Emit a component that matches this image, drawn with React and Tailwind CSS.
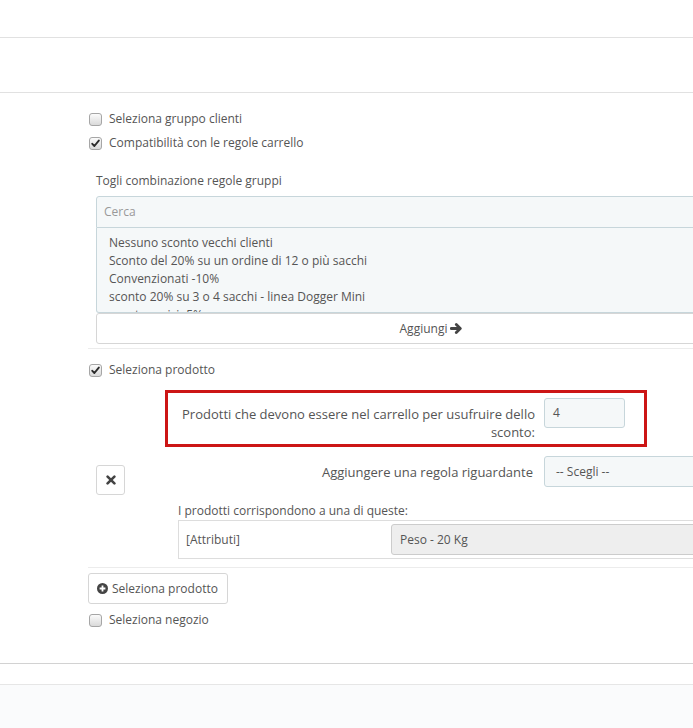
import React from "react";

function Check({ checked }) {
  return (
    <span className="relative inline-flex w-[13px] h-[13px] shrink-0 rounded-[3px] border border-[#a6a6a6] bg-gradient-to-b from-[#fbfbfb] to-[#dadada] items-center justify-center">
      {checked && (
        <svg width="9" height="9" viewBox="0 0 9 9" className="block">
          <path d="M1.3 4.8 L3.4 7 L7.8 1.6" fill="none" stroke="#2b2b2b" strokeWidth="1.9" strokeLinecap="round" strokeLinejoin="round" />
        </svg>
      )}
    </span>
  );
}

function CheckRow({ checked, label }) {
  return (
    <div className="h-6 flex items-center pl-[1px] gap-[7px]">
      <Check checked={checked} />
      <span className="whitespace-nowrap">{label}</span>
    </div>
  );
}

function ArrowRight() {
  return (
    <svg width="12" height="11" viewBox="0 0 12 11" className="block">
      <path d="M1.3 5.5 H9.5" stroke="#444" strokeWidth="2.8" strokeLinecap="round" />
      <path d="M6.3 1.6 L10.3 5.5 L6.3 9.4" fill="none" stroke="#444" strokeWidth="2.8" strokeLinecap="round" strokeLinejoin="round" />
    </svg>
  );
}

function TimesIcon() {
  return (
    <svg width="10" height="10" viewBox="0 0 10 10" className="block">
      <path d="M1.6 1.6 L8.4 8.4 M8.4 1.6 L1.6 8.4" stroke="#444" strokeWidth="2.6" strokeLinecap="round" />
    </svg>
  );
}

function PlusCircle() {
  return (
    <svg width="11" height="11" viewBox="0 0 11 11" className="block">
      <circle cx="5.5" cy="5.5" r="5.5" fill="#444" />
      <path d="M5.5 2.6 V8.4 M2.6 5.5 H8.4" stroke="#fff" strokeWidth="1.8" />
    </svg>
  );
}

export default function App() {
  const items = [
    "Nessuno sconto vecchi clienti",
    "Sconto del 20% su un ordine di 12 o più sacchi",
    "Convenzionati -10%",
    "sconto 20% su 3 o 4 sacchi - linea Dogger Mini",
    "sconto amici -5%",
  ];
  return (
    <div className="relative w-[693px] h-[728px] overflow-hidden bg-white text-[12px] leading-[18px] text-[#555] font-['Open_Sans',sans-serif] flex flex-col">
      <div className="h-[37px] shrink-0" />
      <div className="h-[55px] shrink-0 border-t border-[#e1e1e1]" />
      <div className="shrink-0 border-t border-[#e1e1e1] pt-[14px] pl-[88px] pb-[31px]">
        <CheckRow label="Seleziona gruppo clienti" />
        <CheckRow checked label="Compatibilità con le regole carrello" />
        <div className="ml-[8px] mt-[17px] h-[18px] whitespace-nowrap">Togli combinazione regole gruppi</div>
        <div className="ml-[8px] mt-[6px] w-[670px]">
          <div className="h-[32px] border border-[#c7d6db] bg-[#f5f8f9] rounded-t-[3px] pl-[7px] flex items-center text-[#999]">
            Cerca
          </div>
          <div className="h-[85px] border-x border-b border-[#c7d6db] bg-[#f5f8f9] rounded-b-[3px] overflow-hidden px-[12px] pt-[6px]">
            {items.map((t) => (
              <div key={t} className="h-[18px] whitespace-nowrap">{t}</div>
            ))}
          </div>
          <div className="h-[31px] border border-[#d6d6d6] bg-white rounded-[3px] flex items-center justify-center gap-[3px]">
            <span>Aggiungi</span>
            <ArrowRight />
          </div>
        </div>
        <div className="mt-[4px] border-t border-[#ececec]" />
        <div className="mt-[9px]">
          <CheckRow checked label="Seleziona prodotto" />
        </div>
        <div className="mt-[8px] ml-[77px] w-[482px] h-[57px] border-[3px] border-[#cc1515] flex justify-end items-start pt-[5px] pr-[19px]">
          <div className="mt-[7px] text-right whitespace-nowrap text-[13px]">
            Prodotti che devono essere nel carrello per usufruire dello
            <br />
            sconto:
          </div>
          <div className="ml-[9px] w-[81px] h-[30px] shrink-0 border border-[#c7d6db] bg-[#f5f8f9] rounded-[3px] pl-[8px] flex items-center">
            4
          </div>
        </div>
        <div className="mt-[9px] h-[39px] flex items-start">
          <div className="ml-[8px] mt-[9px] w-[29px] h-[30px] shrink-0 border border-[#d6d6d6] rounded-[3px] bg-white flex items-center justify-center">
            <TimesIcon />
          </div>
          <div className="w-[408px] shrink-0 mt-[7px] text-right whitespace-nowrap text-[13px]">Aggiungere una regola riguardante</div>
          <div className="ml-[11px] w-[300px] h-[31px] shrink-0 border border-[#c7d6db] bg-[#f5f8f9] rounded-[3px] pl-[11px] flex items-center whitespace-nowrap">
            -- Scegli --
          </div>
        </div>
        <div className="ml-[90px] mt-[7px] h-[18px] whitespace-nowrap">I prodotti corrispondono a una di queste:</div>
        <div className="ml-[90px] w-[600px] h-[39px] border border-[#dddddd] flex items-center">
          <div className="w-[212px] shrink-0 pl-[7px]">[Attributi]</div>
          <div className="w-[400px] h-[31px] shrink-0 border border-[#cccccc] bg-[#eeeeee] rounded-[3px] pl-[8px] flex items-center">
            Peso - 20 Kg
          </div>
        </div>
        <div className="mt-[8px] border-t border-[#ececec]" />
        <div className="mt-[5px] w-[140px] h-[31px] border border-[#d6d6d6] rounded-[3px] bg-white flex items-center pl-[8px] gap-[4px] whitespace-nowrap">
          <PlusCircle />
          <span>Seleziona prodotto</span>
        </div>
        <div className="mt-[4px]">
          <CheckRow label="Seleziona negozio" />
        </div>
      </div>
      <div className="h-[21px] shrink-0 border-t border-[#d2d2d2]" />
      <div className="flex-1 border-t border-[#e6e6e6] bg-[#fafbfc]" />
    </div>
  );
}
